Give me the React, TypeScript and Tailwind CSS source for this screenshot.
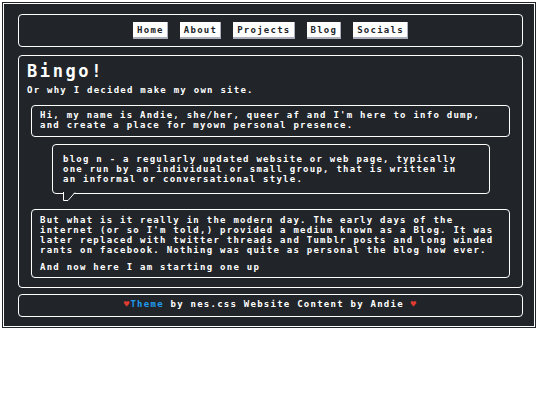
const mono = "font-['DejaVu_Sans_Mono','Liberation_Mono',monospace]";

function NavButton({ label }: { label: string }) {
  return (
    <a
      href="#"
      className="flex h-[17px] items-center bg-white px-[4px] text-[9px] font-bold leading-none tracking-[1.25px] text-[#212529] shadow-[inset_-1px_-2px_0_#adafbc]"
    >
      {label}
    </a>
  );
}

export default function App() {
  const links = ['Home', 'About', 'Projects', 'Blog', 'Socials'];

  return (
    <div className={`min-h-screen bg-white pt-[2px] pl-[2px] pr-[4px] ${mono}`}>
      <div className="border border-[#212529] bg-[#212529]">
        <div className="border border-white pt-[10px] pb-[9px] pl-[14px] pr-[11px] text-white">
          {/* ===== Nav ===== */}
          <nav className="flex h-[33px] items-center justify-center gap-[12px] rounded-[4px] border border-white">
            {links.map((l) => (
              <NavButton key={l} label={l} />
            ))}
          </nav>

          {/* ===== Main ===== */}
          <main className="mt-[8px] rounded-[4px] border border-white px-[8px] pt-[6px] pb-[9px]">
            <h1 className="text-[17px] font-bold leading-[18px] tracking-[2.6px]">Bingo!</h1>
            <p className="mt-[5px] text-[9px] font-bold leading-[10.5px] tracking-[1.25px]">
              Or why I decided make my own site.
            </p>

            <div className="mx-[4px] mt-[9px] rounded-[4px] border border-white px-[8px] pt-[4px] pb-[5px] text-[9px] font-bold leading-[10.5px] tracking-[1.25px]">
              Hi, my name is Andie, she/her, queer af and I'm here to info dump,
              and create a place for myown personal presence.
            </div>

            <div className="relative mt-[7px] ml-[25px] mr-[24px] rounded-[4px] border border-white pl-[10px] pr-[30px] pt-[9px] pb-[9px] text-[9px] font-bold leading-[10px] tracking-[1.25px]">
              blog n - a regularly updated website or web page, typically one run
              by an individual or small group, that is written in an informal or
              conversational style.
              <svg
                className="absolute left-[9px] top-full -mt-[1px]"
                width="16"
                height="10"
                viewBox="0 0 16 10"
              >
                <polygon points="1,0 1,8.5 6,8.5 13,0" fill="#212529" />
                <polyline
                  points="1.5,0 1.5,8.5 6,8.5 13,0.5"
                  fill="none"
                  stroke="#fff"
                  strokeWidth="1"
                />
              </svg>
            </div>

            <div className="mx-[4px] mt-[15px] rounded-[4px] border border-white px-[8px] pt-[5px] pb-[5px] text-[9px] font-bold leading-[10px] tracking-[1.25px]">
              <p>
                But what is it really in the modern day. The early days of the
                internet (or so I'm told,) provided a medium known as a Blog. It
                was later replaced with twitter threads and Tumblr posts and long
                winded rants on facebook. Nothing was quite as personal the blog
                how ever.
              </p>
              <p className="mt-[7px]">And now here I am starting one up</p>
            </div>
          </main>

          {/* ===== Footer ===== */}
          <footer className="mt-[6px] flex h-[23px] items-center justify-center rounded-[4px] border border-white text-[9px] font-bold tracking-[1.25px]">
            <span className="text-[#e03c31]">♥</span>
            <a href="#" className="text-[#209cee]">Theme</a>
            <span>&nbsp;by nes.css Website Content by Andie&nbsp;</span>
            <span className="text-[#e03c31]">♥</span>
          </footer>
        </div>
      </div>
    </div>
  );
}
